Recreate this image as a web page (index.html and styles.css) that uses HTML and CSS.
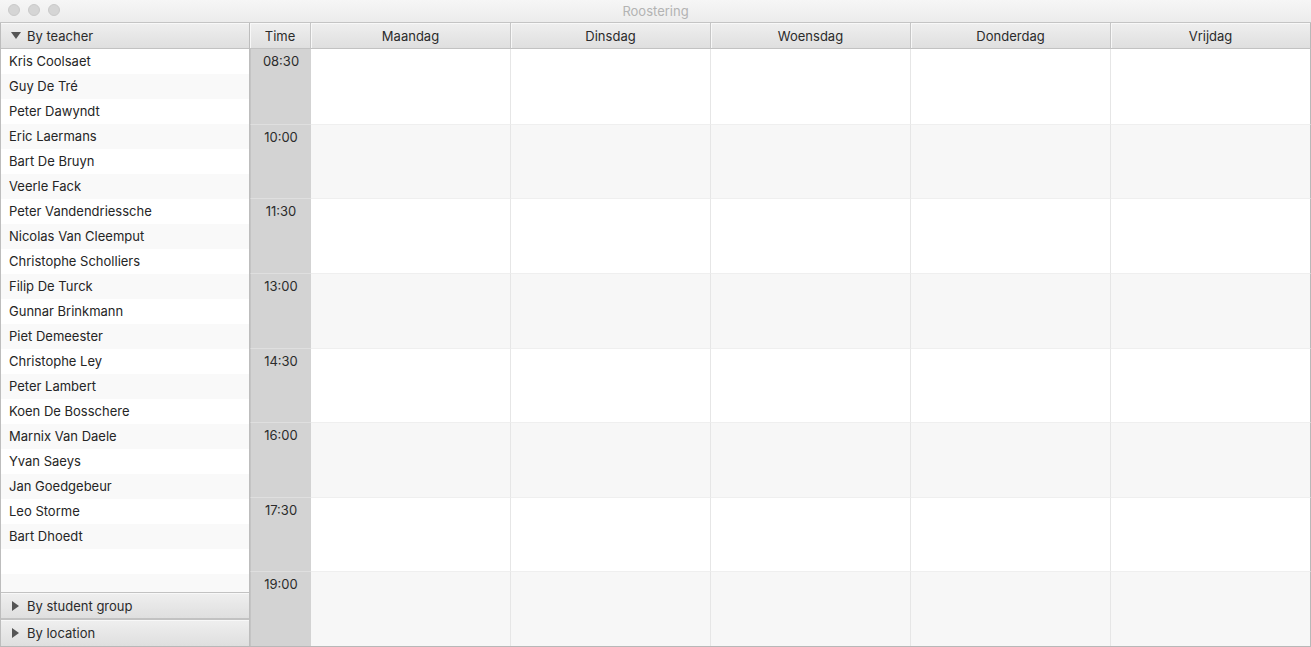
FILE: index.html
```html
<!DOCTYPE html>
<html>
<head>
<meta charset="utf-8">
<title>Roostering</title>
<link rel="stylesheet" href="styles.css">
</head>
<body>
<div class="window">
  <div class="titlebar">
    <div class="lights"><span class="light"></span><span class="light"></span><span class="light"></span></div>
    <div class="title">Roostering</div>
  </div>
  <div class="main">
    <div class="left">
      <div class="pane-header"><span class="arrow down"></span>By teacher</div>
      <div class="list">
        <div class="item">Kris Coolsaet</div>
        <div class="item">Guy De Tré</div>
        <div class="item">Peter Dawyndt</div>
        <div class="item">Eric Laermans</div>
        <div class="item">Bart De Bruyn</div>
        <div class="item">Veerle Fack</div>
        <div class="item">Peter Vandendriessche</div>
        <div class="item">Nicolas Van Cleemput</div>
        <div class="item">Christophe Scholliers</div>
        <div class="item">Filip De Turck</div>
        <div class="item">Gunnar Brinkmann</div>
        <div class="item">Piet Demeester</div>
        <div class="item">Christophe Ley</div>
        <div class="item">Peter Lambert</div>
        <div class="item">Koen De Bosschere</div>
        <div class="item">Marnix Van Daele</div>
        <div class="item">Yvan Saeys</div>
        <div class="item">Jan Goedgebeur</div>
        <div class="item">Leo Storme</div>
        <div class="item">Bart Dhoedt</div>
        <div class="item"></div>
        <div class="item"></div>
      </div>
      <div class="pane-header collapsed"><span class="arrow right"></span>By student group</div>
      <div class="pane-header collapsed"><span class="arrow right"></span>By location</div>
    </div>
    <div class="calendar">
      <div class="cal-head">
        <div class="hcell time-h">Time</div>
        <div class="hcell">Maandag</div>
        <div class="hcell">Dinsdag</div>
        <div class="hcell">Woensdag</div>
        <div class="hcell">Donderdag</div>
        <div class="hcell">Vrijdag</div>
      </div>
      <div class="cal-body">
        <div class="crow"><div class="tcell">08:30</div><div class="dcell"></div><div class="dcell"></div><div class="dcell"></div><div class="dcell"></div><div class="dcell"></div></div>
        <div class="crow"><div class="tcell">10:00</div><div class="dcell"></div><div class="dcell"></div><div class="dcell"></div><div class="dcell"></div><div class="dcell"></div></div>
        <div class="crow"><div class="tcell">11:30</div><div class="dcell"></div><div class="dcell"></div><div class="dcell"></div><div class="dcell"></div><div class="dcell"></div></div>
        <div class="crow"><div class="tcell">13:00</div><div class="dcell"></div><div class="dcell"></div><div class="dcell"></div><div class="dcell"></div><div class="dcell"></div></div>
        <div class="crow"><div class="tcell">14:30</div><div class="dcell"></div><div class="dcell"></div><div class="dcell"></div><div class="dcell"></div><div class="dcell"></div></div>
        <div class="crow"><div class="tcell">16:00</div><div class="dcell"></div><div class="dcell"></div><div class="dcell"></div><div class="dcell"></div><div class="dcell"></div></div>
        <div class="crow"><div class="tcell">17:30</div><div class="dcell"></div><div class="dcell"></div><div class="dcell"></div><div class="dcell"></div><div class="dcell"></div></div>
        <div class="crow"><div class="tcell">19:00</div><div class="dcell"></div><div class="dcell"></div><div class="dcell"></div><div class="dcell"></div><div class="dcell"></div></div>
      </div>
    </div>
  </div>
</div>
</body>
</html>
```
FILE: styles.css
```css
* { box-sizing: border-box; }
html, body { margin: 0; padding: 0; background: #ffffff; }
body {
  font-family: Inter, "Noto Sans", "Liberation Sans", sans-serif;
  font-size: 13px;
  color: #252525;
}
.window {
  width: 1311px;
  height: 647px;
  display: flex;
  flex-direction: column;
  overflow: hidden;
}
.titlebar {
  height: 23px;
  flex: none;
  position: relative;
  background: linear-gradient(#f6f6f6, #ececec);
  border-bottom: 1px solid #c4c4c4;
  display: flex;
  align-items: center;
  justify-content: center;
}
.lights {
  position: absolute;
  left: 8px;
  top: 4px;
  display: flex;
  gap: 8px;
}
.light {
  width: 12px;
  height: 12px;
  border-radius: 50%;
  background: #d5d5d5;
  border: 1px solid #cacaca;
}
.title {
  color: #b3b3b3;
  font-size: 13px;
  line-height: 22px;
}
.main {
  flex: 1;
  display: flex;
  min-height: 0;
  border-bottom: 1px solid #b8b8b8;
}
.left {
  width: 250px;
  flex: none;
  display: flex;
  flex-direction: column;
  border-left: 1px solid #bdbdbd;
  border-right: 1px solid #bdbdbd;
}
.pane-header {
  height: 26px;
  flex: none;
  display: flex;
  align-items: center;
  padding-left: 10px;
  background: linear-gradient(#efefef, #dfdfdf);
  border-bottom: 1px solid #c2c2c2;
  box-shadow: inset 0 1px 0 #f8f8f8;
  color: #2b2b2b;
}
.pane-header.collapsed {
  height: 27px;
  border-top: 1px solid #c2c2c2;
}
.pane-header.collapsed:last-child { border-bottom: none; }
.arrow {
  width: 0;
  height: 0;
  margin-right: 6px;
}
.arrow.down {
  border-left: 5px solid transparent;
  border-right: 5px solid transparent;
  border-top: 7px solid #555;
}
.arrow.right {
  border-top: 5px solid transparent;
  border-bottom: 5px solid transparent;
  border-left: 7px solid #555;
  margin-left: 1px;
  margin-right: 8px;
}
.list {
  flex: 1;
  min-height: 0;
  overflow: hidden;
}
.item {
  height: 25px;
  line-height: 25px;
  padding-left: 8px;
  color: #252525;
  background: #ffffff;
  white-space: nowrap;
}
.item:nth-child(even) { background: #f9f9f9; }
.calendar {
  flex: 1;
  display: flex;
  flex-direction: column;
  min-width: 0;
}
.cal-head {
  height: 26px;
  flex: none;
  display: grid;
  grid-template-columns: 61px repeat(5, 200px);
}
.hcell {
  display: flex;
  align-items: center;
  justify-content: center;
  background: linear-gradient(#efefef, #dfdfdf);
  border-bottom: 1px solid #c2c2c2;
  border-right: 1px solid #c6c6c6;
  box-shadow: inset 1px 1px 0 #f8f8f8;
  color: #2b2b2b;
}
.hcell:last-child { border-right: 1px solid #b8b8b8; }
.cal-body {
  flex: 1;
  display: flex;
  flex-direction: column;
  min-height: 0;
}
.crow {
  flex: 1;
  display: grid;
  grid-template-columns: 61px repeat(5, 200px);
  background: #ffffff;
}
.crow:nth-child(even) { background: #f7f7f7; }
.crow + .crow .dcell { border-top: 1px solid #efefef; }
.tcell {
  background: #d3d3d3;
  border-left: 1px solid #c4c4c4;
  text-align: center;
  padding-top: 4px;
  color: #2b2b2b;
}
.crow + .crow .tcell { border-top: 1px solid #dfdfdf; }
.dcell {
  border-right: 1px solid #e6e6e6;
}
.dcell:last-child { border-right: 1px solid #b8b8b8; }
```
